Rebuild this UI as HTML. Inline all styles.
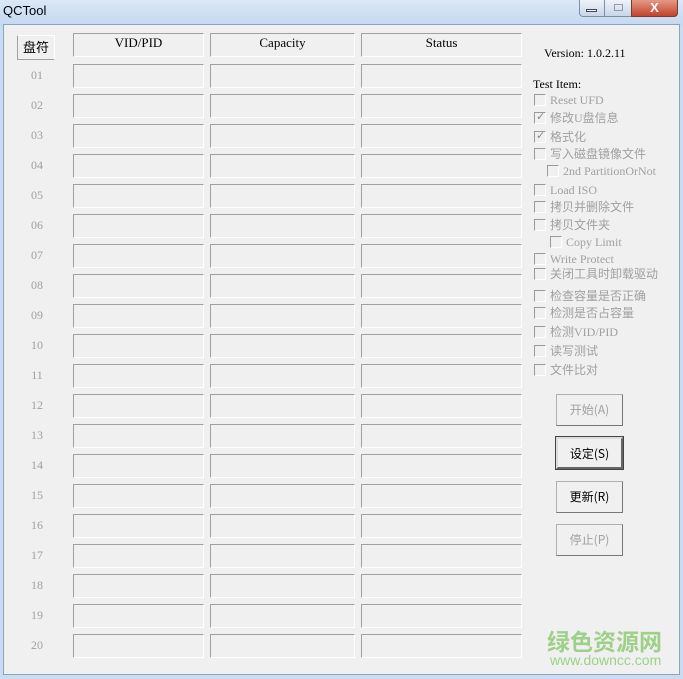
<!DOCTYPE html><html><head><meta charset="utf-8"><style>
*{margin:0;padding:0;box-sizing:border-box}
body{width:683px;height:679px;overflow:hidden;background:#c9dcf2;font-family:"Liberation Serif","Noto Serif CJK SC",serif;position:relative}
.tb{position:absolute;left:0;top:0;width:683px;height:26px;background:linear-gradient(#dbe8f7,#c4d8f0)}
.t{position:absolute;left:3px;top:3px;font:13px "Liberation Sans",sans-serif;color:#000}
.cl{position:absolute;left:3px;top:24px;width:677px;height:651px;background:#f0f0f0;border:1px solid #8aa3c2}
.a{position:absolute}
.sk{position:absolute;border-top:1px solid #a0a0a0;border-left:1px solid #a0a0a0;border-bottom:1px solid #fff;border-right:1px solid #fff;height:24px}
.hd{font-size:13px;text-align:center;line-height:18px;color:#000}
.n{position:absolute;left:17px;width:40px;text-align:center;font-size:12px;color:#a0a0a0}
.cb{position:absolute;font-size:12px;color:#a0a0a0;line-height:14px;font-family:"Liberation Serif","Noto Sans CJK SC",serif;white-space:nowrap}
.cb i{position:relative;display:inline-block;width:12px;height:12px;border-top:1px solid #9a9a9a;border-left:1px solid #9a9a9a;border-bottom:1px solid #fff;border-right:1px solid #fff;background:#f0f0f0;vertical-align:-2px;margin-right:4px;font-style:normal}
.cb i b{position:absolute;left:1px;top:-2px;font:11px "DejaVu Sans",sans-serif;color:#888;line-height:12px}
.bt{position:absolute;left:556px;width:67px;height:32px;border:1px solid #b0b0b0;border-right-color:#777;border-bottom-color:#777;background:#f0f0f0;font:12px "Noto Sans CJK SC",sans-serif;text-align:center;line-height:30px;color:#a0a0a0}
.bt.on{color:#000;border:2px solid #666;border-top-color:#ddd;border-left-color:#ddd;outline:1px solid #444}
</style></head><body>
<div class="tb"></div>
<div class="t">QCTool</div>
<div class="a" style="left:579px;top:0;width:26px;height:17px;background:linear-gradient(#eef3fa,#c8d6e8);border:1px solid #7f8ea3;border-top:none;border-radius:0 0 0 4px"></div>
<div class="a" style="left:586px;top:9px;width:11px;height:3px;border:1px solid #445;background:#fff"></div>
<div class="a" style="left:605px;top:0;width:26px;height:17px;background:linear-gradient(#eef3fa,#c8d6e8);border-bottom:1px solid #7f8ea3"></div>
<div class="a" style="left:614px;top:4px;width:9px;height:7px;border:1px solid #99a"></div>
<div class="a" style="left:631px;top:0;width:47px;height:17px;background:linear-gradient(#e39a86,#c2432a);border:1px solid #7a3a30;border-top:none;border-radius:0 0 4px 0;color:#fff;font:bold 13px 'Liberation Sans',sans-serif;text-align:center;line-height:16px">X</div>
<div class="cl"></div>
<div class="a" style="left:17px;top:35px;width:38px;height:25px;border:1px solid #a0a0a0;border-top-color:#fff;border-right-color:#fff;font:13px 'Noto Sans CJK SC',sans-serif;text-align:center;line-height:22px">盘符</div>
<div class="sk hd" style="left:73px;top:33px;width:131px">VID/PID</div>
<div class="sk hd" style="left:210px;top:33px;width:145px">Capacity</div>
<div class="sk hd" style="left:361px;top:33px;width:161px">Status</div>
<div class="a" style="left:0;top:0">
<div class="n" style="top:68px">01</div><div class="n" style="top:98px">02</div><div class="n" style="top:128px">03</div><div class="n" style="top:158px">04</div><div class="n" style="top:188px">05</div><div class="n" style="top:218px">06</div><div class="n" style="top:248px">07</div><div class="n" style="top:278px">08</div><div class="n" style="top:308px">09</div><div class="n" style="top:338px">10</div><div class="n" style="top:368px">11</div><div class="n" style="top:398px">12</div><div class="n" style="top:428px">13</div><div class="n" style="top:458px">14</div><div class="n" style="top:488px">15</div><div class="n" style="top:518px">16</div><div class="n" style="top:548px">17</div><div class="n" style="top:578px">18</div><div class="n" style="top:608px">19</div><div class="n" style="top:638px">20</div>
</div>
<div class="a" style="left:0;top:64px">
<div style="position:relative;height:600px">
<div class="sk" style="left:73px;top:0;width:131px"></div><div class="sk" style="left:210px;top:0;width:145px"></div><div class="sk" style="left:361px;top:0;width:161px"></div>
<div class="sk" style="left:73px;top:30px;width:131px"></div><div class="sk" style="left:210px;top:30px;width:145px"></div><div class="sk" style="left:361px;top:30px;width:161px"></div>
<div class="sk" style="left:73px;top:60px;width:131px"></div><div class="sk" style="left:210px;top:60px;width:145px"></div><div class="sk" style="left:361px;top:60px;width:161px"></div>
<div class="sk" style="left:73px;top:90px;width:131px"></div><div class="sk" style="left:210px;top:90px;width:145px"></div><div class="sk" style="left:361px;top:90px;width:161px"></div>
<div class="sk" style="left:73px;top:120px;width:131px"></div><div class="sk" style="left:210px;top:120px;width:145px"></div><div class="sk" style="left:361px;top:120px;width:161px"></div>
<div class="sk" style="left:73px;top:150px;width:131px"></div><div class="sk" style="left:210px;top:150px;width:145px"></div><div class="sk" style="left:361px;top:150px;width:161px"></div>
<div class="sk" style="left:73px;top:180px;width:131px"></div><div class="sk" style="left:210px;top:180px;width:145px"></div><div class="sk" style="left:361px;top:180px;width:161px"></div>
<div class="sk" style="left:73px;top:210px;width:131px"></div><div class="sk" style="left:210px;top:210px;width:145px"></div><div class="sk" style="left:361px;top:210px;width:161px"></div>
<div class="sk" style="left:73px;top:240px;width:131px"></div><div class="sk" style="left:210px;top:240px;width:145px"></div><div class="sk" style="left:361px;top:240px;width:161px"></div>
<div class="sk" style="left:73px;top:270px;width:131px"></div><div class="sk" style="left:210px;top:270px;width:145px"></div><div class="sk" style="left:361px;top:270px;width:161px"></div>
<div class="sk" style="left:73px;top:300px;width:131px"></div><div class="sk" style="left:210px;top:300px;width:145px"></div><div class="sk" style="left:361px;top:300px;width:161px"></div>
<div class="sk" style="left:73px;top:330px;width:131px"></div><div class="sk" style="left:210px;top:330px;width:145px"></div><div class="sk" style="left:361px;top:330px;width:161px"></div>
<div class="sk" style="left:73px;top:360px;width:131px"></div><div class="sk" style="left:210px;top:360px;width:145px"></div><div class="sk" style="left:361px;top:360px;width:161px"></div>
<div class="sk" style="left:73px;top:390px;width:131px"></div><div class="sk" style="left:210px;top:390px;width:145px"></div><div class="sk" style="left:361px;top:390px;width:161px"></div>
<div class="sk" style="left:73px;top:420px;width:131px"></div><div class="sk" style="left:210px;top:420px;width:145px"></div><div class="sk" style="left:361px;top:420px;width:161px"></div>
<div class="sk" style="left:73px;top:450px;width:131px"></div><div class="sk" style="left:210px;top:450px;width:145px"></div><div class="sk" style="left:361px;top:450px;width:161px"></div>
<div class="sk" style="left:73px;top:480px;width:131px"></div><div class="sk" style="left:210px;top:480px;width:145px"></div><div class="sk" style="left:361px;top:480px;width:161px"></div>
<div class="sk" style="left:73px;top:510px;width:131px"></div><div class="sk" style="left:210px;top:510px;width:145px"></div><div class="sk" style="left:361px;top:510px;width:161px"></div>
<div class="sk" style="left:73px;top:540px;width:131px"></div><div class="sk" style="left:210px;top:540px;width:145px"></div><div class="sk" style="left:361px;top:540px;width:161px"></div>
<div class="sk" style="left:73px;top:570px;width:131px"></div><div class="sk" style="left:210px;top:570px;width:145px"></div><div class="sk" style="left:361px;top:570px;width:161px"></div>
</div></div>
<div class="a" style="left:544px;top:46px;font-size:12px">Version: 1.0.2.11</div>
<div class="a" style="left:533px;top:77px;font-size:12px">Test Item:</div>
<div class="cb" style="left:534px;top:93px"><i></i>Reset UFD</div>
<div class="cb" style="left:534px;top:111px"><i><b>✓</b></i>修改U盘信息</div>
<div class="cb" style="left:534px;top:130px"><i><b>✓</b></i>格式化</div>
<div class="cb" style="left:534px;top:147px"><i></i>写入磁盘镜像文件</div>
<div class="cb" style="left:547px;top:164px"><i></i>2nd PartitionOrNot</div>
<div class="cb" style="left:534px;top:183px"><i></i>Load ISO</div>
<div class="cb" style="left:534px;top:200px"><i></i>拷贝并删除文件</div>
<div class="cb" style="left:534px;top:218px"><i></i>拷贝文件夹</div>
<div class="cb" style="left:550px;top:235px"><i></i>Copy Limit</div>
<div class="cb" style="left:534px;top:252px"><i></i>Write Protect</div>
<div class="cb" style="left:534px;top:267px"><i></i>关闭工具时卸载驱动</div>
<div class="cb" style="left:534px;top:289px"><i></i>检查容量是否正确</div>
<div class="cb" style="left:534px;top:306px"><i></i>检测是否占容量</div>
<div class="cb" style="left:534px;top:325px"><i></i>检测VID/PID</div>
<div class="cb" style="left:534px;top:344px"><i></i>读写测试</div>
<div class="cb" style="left:534px;top:363px"><i></i>文件比对</div>
<div class="bt" style="top:394px">开始(A)</div>
<div class="bt on" style="top:437px">设定(S)</div>
<div class="bt" style="top:481px;color:#000">更新(R)</div>
<div class="bt" style="top:524px">停止(P)</div>
<div class="a" style="left:547px;top:623px;font:bold 23px 'Noto Sans CJK SC',sans-serif;color:#9fd08a">绿色资源网</div>
<div class="a" style="left:550px;top:652px;font:14px 'Liberation Sans',sans-serif;color:#9fd08a">www.downcc.com</div>
</body></html>
